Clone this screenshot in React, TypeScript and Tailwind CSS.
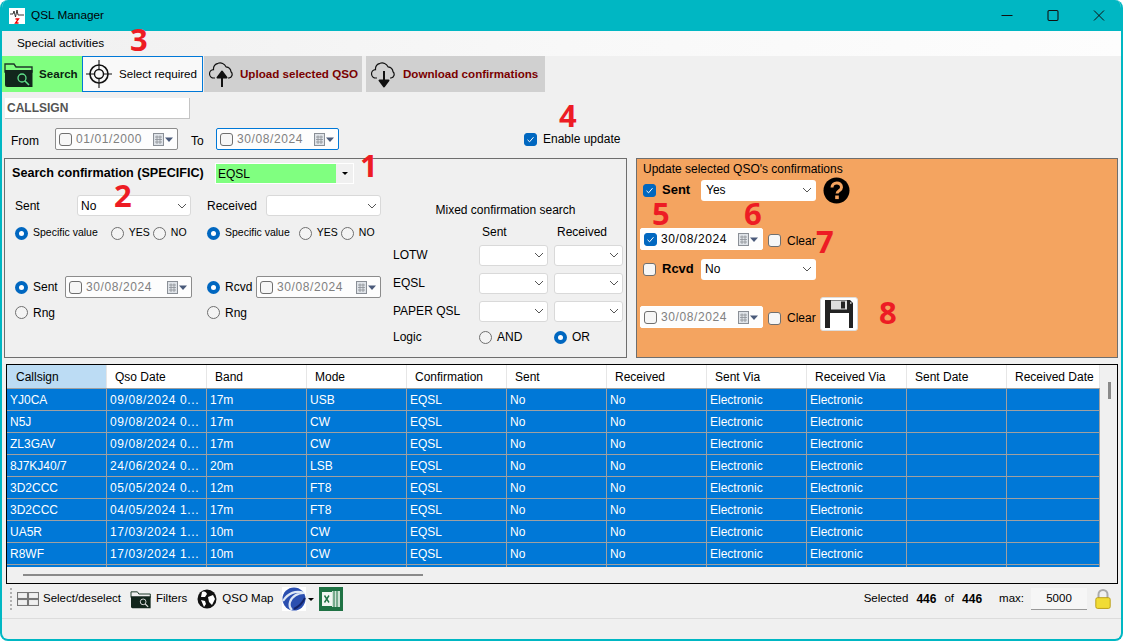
import React from "react";

const FONT = "font-['Liberation_Sans',sans-serif]";

// small tick checkbox, blue when checked
const Check = ({ on = false }: { on?: boolean }) => (
  <span
    className={`flex h-[13px] w-[13px] shrink-0 items-center justify-center rounded-[3px] border ${
      on ? "border-[#0067c0] bg-[#0067c0]" : "border-[#6f6f6f] bg-[#f6f6f6]"
    }`}
  >
    {on && (
      <svg width="9" height="9" viewBox="0 0 9 9" fill="none" stroke="#fff" strokeWidth="1">
        <path d="M1.5 4.8 3.6 6.8 7.5 2.2" />
      </svg>
    )}
  </span>
);

const Radio = ({ on = false }: { on?: boolean }) => (
  <span
    className={`flex h-[13px] w-[13px] shrink-0 items-center justify-center rounded-full ${
      on ? "bg-[#0067c0]" : "border border-[#6f6f6f] bg-[#f4f4f4]"
    }`}
  >
    {on && <span className="h-[5px] w-[5px] rounded-full bg-white" />}
  </span>
);

const Chevron = () => (
  <svg width="10" height="6" viewBox="0 0 10 6" fill="none" stroke="#555" strokeWidth="1" className="shrink-0">
    <path d="M1 1 5 5 9 1" />
  </svg>
);

const Select = ({ value = "", className = "" }: { value?: string; className?: string }) => (
  <div
    className={`flex h-[21px] items-center justify-between rounded-[3px] border border-[#d9d9d9] bg-white pl-[3px] pr-[3px] text-[12px] text-black ${className}`}
  >
    <span>{value}</span>
    <Chevron />
  </div>
);

const CalIcon = () => (
  <svg width="22" height="15" viewBox="0 0 22 15" className="shrink-0">
    <rect x="1.5" y="1.5" width="10" height="12" fill="#dfe3e8" stroke="#8a8f96" />
    <path d="M3 5h7M3 7.5h7M3 10h7M5 3.5v8.5M8 3.5v8.5" stroke="#8a8f96" strokeWidth="0.8" />
    <path d="M13 5.5h8l-4 4.5z" fill="#4a5a7a" />
  </svg>
);

const DateBox = ({
  value,
  on = false,
  focus = false,
  dim = true,
  className = "",
}: {
  value: string;
  on?: boolean;
  focus?: boolean;
  dim?: boolean;
  className?: string;
}) => (
  <div
    className={`flex h-[22px] items-center justify-between rounded-[2px] border pl-[3px] pr-[3px] text-[12px] tracking-[0.6px] ${
      focus ? "border-[#0078d7]" : "border-[#8c8c8c]"
    } ${dim ? "text-[#808080]" : "text-black"} bg-[#fdfdfd] ${className}`}
  >
    <span className="flex items-center gap-[4px]">
      <Check on={on} />
      {value}
    </span>
    <CalIcon />
  </div>
);

const RadioLabel = ({ on = false, text, className = "" }: { on?: boolean; text: string; className?: string }) => (
  <span className={`flex items-center gap-[5px] whitespace-nowrap ${className}`}>
    <Radio on={on} />
    {text}
  </span>
);

const FolderIcon = ({ w = 30, h = 28, lens = "#5fe08a" }: { w?: number; h?: number; lens?: string }) => (
  <svg width={w} height={h} viewBox="0 0 30 28" className="shrink-0">
    <path d="M1 4h9l2 3h16v5H1z" fill="none" stroke="#1f3a2a" strokeWidth="1.4" />
    <path d="M1 10h27.5v17H3a2 2 0 0 1-2-2z" fill="#12261c" />
    <circle cx="18" cy="18" r="4" fill="none" stroke={lens} strokeWidth="1.3" />
    <path d="m21 21 4 4" stroke={lens} strokeWidth="1.6" />
  </svg>
);

const TargetIcon = () => (
  <svg width="26" height="30" viewBox="0 0 26 30" fill="none" stroke="#111" className="shrink-0">
    <circle cx="13" cy="15" r="9" strokeWidth="1.6" />
    <circle cx="13" cy="15" r="4.5" strokeWidth="1.4" />
    <path d="M13 1v9M13 20v9M0 15h8M18 15h8" strokeWidth="1.1" />
  </svg>
);

const CloudIcon = ({ down = false }: { down?: boolean }) => (
  <svg width="26" height="28" viewBox="0 0 26 28" fill="none" className="shrink-0">
    <path
      d="M6 18H5a4.2 4.2 0 0 1-.5-8.4 6 6 0 0 1 4.5-6.3 6.5 6.5 0 0 1 8 3.5 5.6 5.6 0 0 1 5 5 3.6 3.6 0 0 1-2 6.2h-1"
      stroke="#111"
      strokeWidth="1.2"
    />
    {down ? (
      <path d="M13 11v11M8.5 20.5h9L13 26.5z" stroke="#111" strokeWidth="2" fill="#111" strokeLinejoin="round" />
    ) : (
      <path d="M13 27V16M8.5 17.5h9L13 11.5z" stroke="#111" strokeWidth="2" fill="#111" strokeLinejoin="round" />
    )}
  </svg>
);

const SaveIcon = () => (
  <svg width="30" height="30" viewBox="0 0 30 30">
    <path d="M1 1h25l3 3v25H1z" fill="#222" />
    <rect x="7" y="1.5" width="16" height="9" fill="#ddd" />
    <rect x="17" y="2.5" width="4" height="7" fill="#222" />
    <rect x="6" y="14" width="19" height="15" fill="#fff" />
    <rect x="26" y="3" width="1.5" height="2" fill="#aaa" />
  </svg>
);

const rows = [
  ["YJ0CA", "09/08/2024 0...", "17m", "USB"],
  ["N5J", "09/08/2024 0...", "17m", "CW"],
  ["ZL3GAV", "09/08/2024 0...", "17m", "CW"],
  ["8J7KJ40/7", "24/06/2024 0...", "20m", "LSB"],
  ["3D2CCC", "05/05/2024 0...", "12m", "FT8"],
  ["3D2CCC", "04/05/2024 1...", "17m", "FT8"],
  ["UA5R", "17/03/2024 1...", "10m", "CW"],
  ["R8WF", "17/03/2024 1...", "10m", "CW"],
];

const heads = ["Callsign", "Qso Date", "Band", "Mode", "Confirmation", "Sent", "Received", "Sent Via", "Received Via", "Sent Date", "Received Date"];

const Mark = ({ n, className }: { n: string; className: string }) => (
  <span className={`absolute font-['Open_Sans',sans-serif] text-[31px] font-bold leading-[22px] text-[#ed1c24] ${className}`}>{n}</span>
);

export default function App() {
  return (
    <div className={`relative flex h-[641px] w-[1123px] flex-col overflow-hidden rounded-[8px] border-x-2 border-b-2 border-[#00b7c3] bg-[#f0f0f0] text-[12px] text-black ${FONT}`}>
      {/* title bar */}
      <div className="-mx-[2px] flex h-[31px] shrink-0 items-center bg-[#00b7c3] pl-[9px] pr-[1px]">
        <span className="flex h-[16px] w-[16px] items-center justify-center bg-white">
          <svg width="16" height="16" viewBox="0 0 16 16" fill="none">
            <path d="M1 6h3l1-3 1.5 6 1.5-7 1 5h6" stroke="#222" strokeWidth="0.9" />
            <path d="M6.5 11h3l-3 4h3" stroke="#e00" strokeWidth="1.3" />
          </svg>
        </span>
        <span className="ml-[6px] text-[11.8px]">QSL Manager</span>
        <div className="ml-auto flex items-center">
          <svg width="46" height="16" viewBox="0 0 46 16" stroke="#111" fill="none">
            <path d="M17.5 7.5h11" />
          </svg>
          <svg width="46" height="16" viewBox="0 0 46 16" stroke="#111" fill="none">
            <rect x="18" y="2.5" width="10" height="10" rx="1.2" strokeWidth="1.1" />
          </svg>
          <svg width="46" height="16" viewBox="0 0 46 16" stroke="#111" fill="none">
            <path d="M18 2.5l10 10M28 2.5l-10 10" />
          </svg>
        </div>
      </div>

      {/* menu */}
      <div className="flex h-[25px] shrink-0 items-center bg-gradient-to-r from-[#f0f0f0] via-[#f8f8f8] to-[#fdfdfd] pl-[15px] text-[11.8px]">
        Special activities
      </div>

      {/* tabs */}
      <div className="flex h-[36px] shrink-0 items-stretch whitespace-nowrap text-[11.6px] font-bold">
        <div className="-ml-[1px] flex w-[81px] items-center gap-[5px] bg-[#80ff80] pl-[3px] text-[#0a1f12]">
          <FolderIcon />
          Search
        </div>
        <div className="flex w-[121px] items-center gap-[7px] border border-[#0078d7] bg-[#f9f9f9] pl-[3px] font-normal">
          <TargetIcon />
          Select required
        </div>
        <div className="ml-[1px] flex w-[158px] items-center gap-[5px] bg-[#d0d0d0] pl-[5px] text-[#7a0000]">
          <CloudIcon />
          Upload selected QSO
        </div>
        <div className="ml-[4px] flex w-[179px] items-center gap-[6px] bg-[#d0d0d0] pl-[5px] text-[#7a0000]">
          <CloudIcon down />
          Download confirmations
        </div>
      </div>

      {/* callsign */}
      <div className="ml-[3px] mt-[6px] flex h-[21px] w-[185px] shrink-0 items-center border-b border-r border-[#c4c4c4] bg-white pl-[2px] font-bold text-[#555]">
        CALLSIGN
      </div>

      {/* date range */}
      <div className="mt-[9px] flex h-[22px] shrink-0 items-center">
        <span className="ml-[9px] mt-[3px] w-[44px]">From</span>
        <DateBox value="01/01/2000" className="w-[123px]" />
        <span className="ml-[13px] mt-[3px] w-[25px]">To</span>
        <DateBox value="30/08/2024" focus className="w-[123px]" />
        <span className="ml-[185px] flex items-center gap-[6px] whitespace-nowrap">
          <Check on />
          Enable update
        </span>
      </div>

      {/* panels */}
      <div className="mt-[8px] flex h-[200px] shrink-0 pl-[2px] pr-[3px]">
        <div className="flex h-full w-[623px] border border-[#6e6e6e]">
          <div className="w-[387px] shrink-0">
            <div className="mt-[4px] flex h-[21px] items-center">
              <span className="ml-[7px] w-[203px] whitespace-nowrap text-[12.6px] font-bold">Search confirmation (SPECIFIC)</span>
              <div className="flex h-[21px] w-[139px] border border-white">
                <span className="flex flex-1 items-center bg-[#80ff80] pl-[2px]">EQSL</span>
                <span className="flex w-[17px] items-center justify-center">
                  <span className="h-0 w-0 border-x-[3px] border-t-[3px] border-x-transparent border-t-black" />
                </span>
              </div>
            </div>

            <div className="mt-[11px] flex">
              <div className="ml-[10px] w-[177px]">
                <div className="flex h-[21px] items-center">
                  <span className="w-[62px]">Sent</span>
                  <Select value="No" className="w-[114px]" />
                </div>
                <div className="mt-[9px] flex h-[16px] items-center text-[10.5px]">
                  <RadioLabel on text="Specific value" />
                  <RadioLabel text="YES" className="ml-[13px]" />
                  <RadioLabel text="NO" className="ml-[3px]" />
                </div>
                <div className="mt-[35px] flex h-[22px] items-center">
                  <RadioLabel on text="Sent" className="w-[50px]" />
                  <DateBox value="30/08/2024" className="w-[127px]" />
                </div>
                <RadioLabel text="Rng" className="mt-[6px] h-[17px]" />
              </div>
              <div className="ml-[15px] w-[175px]">
                <div className="flex h-[21px] items-center">
                  <span className="w-[59px]">Received</span>
                  <Select className="w-[115px]" />
                </div>
                <div className="mt-[9px] flex h-[16px] items-center text-[10.5px]">
                  <RadioLabel on text="Specific value" />
                  <RadioLabel text="YES" className="ml-[9px]" />
                  <RadioLabel text="NO" className="ml-[3px]" />
                </div>
                <div className="mt-[35px] flex h-[22px] items-center">
                  <RadioLabel on text="Rcvd" className="w-[49px]" />
                  <DateBox value="30/08/2024" className="w-[125px]" />
                </div>
                <RadioLabel text="Rng" className="mt-[6px] h-[17px]" />
              </div>
            </div>
          </div>

          <div className="ml-[1px] w-[231px]">
            <div className="mt-[42px] pr-[6px] text-center">Mixed confirmation search</div>
            <div className="mt-[7px] flex h-[12px] items-center">
              <span className="ml-[89px] w-[75px]">Sent</span>
              <span>Received</span>
            </div>
            {["LOTW", "EQSL", "PAPER QSL"].map((name) => (
              <div key={name} className="mt-[6px] flex h-[22px] items-center">
                <span className="w-[86px]">{name}</span>
                <Select className="w-[69px]" />
                <Select className="ml-[6px] w-[69px]" />
              </div>
            ))}
            <div className="mt-[7px] flex h-[16px] items-center">
              <span className="w-[86px]">Logic</span>
              <RadioLabel text="AND" className="w-[75px]" />
              <RadioLabel on text="OR" />
            </div>
          </div>
        </div>

        <div className="ml-[9px] h-full w-[482px] border border-[#6e6e6e] bg-[#f4a460]">
          <div className="ml-[6px] mt-[1px] h-[15px]">Update selected QSO's confirmations</div>
          <div className="ml-[6px] mt-[4px] flex h-[22px] items-center">
            <Check on />
            <span className="ml-[6px] w-[39px] text-[13px] font-bold">Sent</span>
            <Select value="Yes" className="w-[115px] border-transparent pl-[4px]" />
            <svg width="27" height="27" viewBox="0 0 27 27" className="ml-[7px]">
              <circle cx="13.5" cy="13.5" r="13" fill="#000" />
              <path d="M9 10.5c0-6 9.5-6 9.5-.3 0 3.6-4.4 3.4-4.4 6.3" fill="none" stroke="#f4a460" strokeWidth="3" />
              <rect x="12.2" y="18.5" width="3.6" height="3.6" fill="#f4a460" />
            </svg>
          </div>
          <div className="ml-[3px] mt-[27px] flex h-[22px] items-center">
            <DateBox value="30/08/2024" on dim={false} className="w-[123px] border-white" />
            <span className="ml-[5px] mt-[3px] flex items-center gap-[6px]">
              <Check />
              Clear
            </span>
          </div>
          <div className="ml-[6px] mt-[8px] flex h-[22px] items-center">
            <Check />
            <span className="ml-[6px] w-[39px] text-[13px] font-bold">Rcvd</span>
            <Select value="No" className="w-[115px] border-transparent" />
          </div>
          <div className="ml-[3px] mt-[17px] flex h-[34px] items-start">
            <DateBox value="30/08/2024" className="mt-[9px] w-[123px] border-white" />
            <span className="ml-[5px] mt-[12px] flex w-[52px] items-center gap-[6px]">
              <Check />
              Clear
            </span>
            <span className="flex h-[34px] w-[38px] items-center justify-center rounded-[3px] border border-[#ddd] bg-white">
              <SaveIcon />
            </span>
          </div>
        </div>
      </div>

      {/* grid */}
      <div className="relative mx-[4px] mt-[6px] h-[220px] w-[1112px] shrink-0 overflow-hidden border border-black bg-[#f0f0f0]">
        <div className="flex h-[23px] w-[1093px] bg-white">
          {heads.map((h, i) => (
            <div
              key={h}
              className={`flex h-full shrink-0 items-center border-r border-[#e6e6e6] pl-[8px] ${i === 0 ? "bg-[#bcdcf4] pl-[9px]" : ""} ${i === 10 ? "w-[93px]" : "w-[100px]"}`}
            >
              {h}
            </div>
          ))}
        </div>
        {rows.concat([["", "", "", ""]]).map((r, i) => (
          <div key={i} className={`flex w-[1093px] border-t border-[#a0a0a0] bg-[#0078d7] text-white ${i === 8 ? "h-[3px]" : "h-[22px]"}`}>
            {[r[0], r[1], r[2], r[3], r[0] ? "EQSL" : "", r[0] ? "No" : "", r[0] ? "No" : "", r[0] ? "Electronic" : "", r[0] ? "Electronic" : "", "", ""].map((c, j) => (
              <div
                key={j}
                className={`flex h-full shrink-0 items-center border-r border-[#a0a0a0] pl-[3px] ${j === 10 ? "w-[93px]" : "w-[100px]"} ${j === 1 ? "tracking-[0.6px]" : ""}`}
              >
                {c}
              </div>
            ))}
          </div>
        ))}
        {/* scrollbars */}
        <div className="absolute left-[1101px] top-[17px] h-[17px] w-[3px] bg-[#8a8a8a]" />
        <div className="absolute left-[16px] top-[209px] h-[2px] w-[400px] bg-[#8a8a8a]" />
      </div>

      {/* bottom bar */}
      <div className="mt-[1px] flex h-[28px] w-full shrink-0 items-center pl-[8px] pr-[9px] text-[11.5px]">
        <span className="h-[22px] w-[3px] border-l-2 border-dotted border-[#b0b0b0]" />
        <svg width="22" height="14" viewBox="0 0 22 14" fill="none" stroke="#777" strokeWidth="1.1" className="ml-[4px]">
          <rect x="0.5" y="0.5" width="10" height="6" />
          <rect x="11.5" y="0.5" width="10" height="6" />
          <rect x="0.5" y="7.5" width="10" height="6" />
          <rect x="11.5" y="7.5" width="10" height="6" />
        </svg>
        <span className="ml-[4px]">Select/deselect</span>
        <span className="ml-[9px]">
          <FolderIcon w={22} h={20} lens="#ddd" />
        </span>
        <span className="ml-[4px]">Filters</span>
        <svg width="20" height="20" viewBox="0 0 20 20" className="ml-[10px]">
          <circle cx="10" cy="10" r="9.5" fill="#111" />
          <path d="M5 3c3-1 4 0 5 2l-2 3-4 0zM11 8l5-2 2 4-3 6-3-3zM4 11l4 1 1 3-2 3z" fill="#fff" />
        </svg>
        <span className="ml-[5px]">QSO Map</span>
        <svg width="24" height="24" viewBox="0 0 24 24" className="ml-[9px] bg-white">
          <circle cx="12" cy="12" r="11.5" fill="#2b4fb0" />
          <path d="M1 14C6 6 14 3 22 6c-6 0-12 3-14 9-1 3 0 6 2 8" fill="none" stroke="#dfe8f5" strokeWidth="2.2" />
          <path d="M12 22c6-3 9-7 11-11" fill="none" stroke="#14246a" strokeWidth="2" />
        </svg>
        <span className="ml-[2px] h-0 w-0 border-x-[3px] border-t-[3px] border-x-transparent border-t-black" />
        <svg width="24" height="24" viewBox="0 0 24 24" className="ml-[5px]">
          <rect width="24" height="24" fill="#1f7244" />
          <rect x="13" y="4" width="8" height="16" fill="#cfe3d6" />
          <path d="M15 4v16M18 4v16" stroke="#1f7244" />
          <rect x="3" y="5" width="10" height="14" fill="#f1f6f2" />
          <path d="M5.5 8.5 10 15.5M10 8.5 5.5 15.5" stroke="#1f7244" strokeWidth="1.4" />
        </svg>
        <span className="ml-auto">Selected</span>
        <span className="ml-[8px] text-[12px] font-bold">446</span>
        <span className="ml-[8px]">of</span>
        <span className="ml-[8px] text-[12px] font-bold">446</span>
        <span className="ml-[17px]">max:</span>
        <span className="ml-[7px] flex h-[22px] w-[56px] items-center justify-center border-b border-[#999] bg-[#f6f6f6]">5000</span>
        <svg width="18" height="24" viewBox="0 0 20 24" className="ml-[7px]">
          <path d="M5 11V7a5 5 0 0 1 10 0v4" fill="none" stroke="#aaa" strokeWidth="2.2" />
          <rect x="2" y="10.5" width="16" height="12" rx="2" fill="#f1dc35" stroke="#b79a10" />
        </svg>
      </div>

      <div className="mt-[5px] h-px w-full shrink-0 bg-[#dcdcdc]" />

      {/* annotations */}
      <Mark n="3" className="left-[128px] top-[28px]" />
      <Mark n="4" className="left-[557px] top-[104px]" />
      <Mark n="1" className="left-[358px] top-[154px]" />
      <Mark n="2" className="left-[112px] top-[184px]" />
      <Mark n="5" className="left-[650px] top-[202px]" />
      <Mark n="6" className="left-[742px] top-[202px]" />
      <Mark n="7" className="left-[814px] top-[230px]" />
      <Mark n="8" className="left-[877px] top-[301px]" />
    </div>
  );
}
